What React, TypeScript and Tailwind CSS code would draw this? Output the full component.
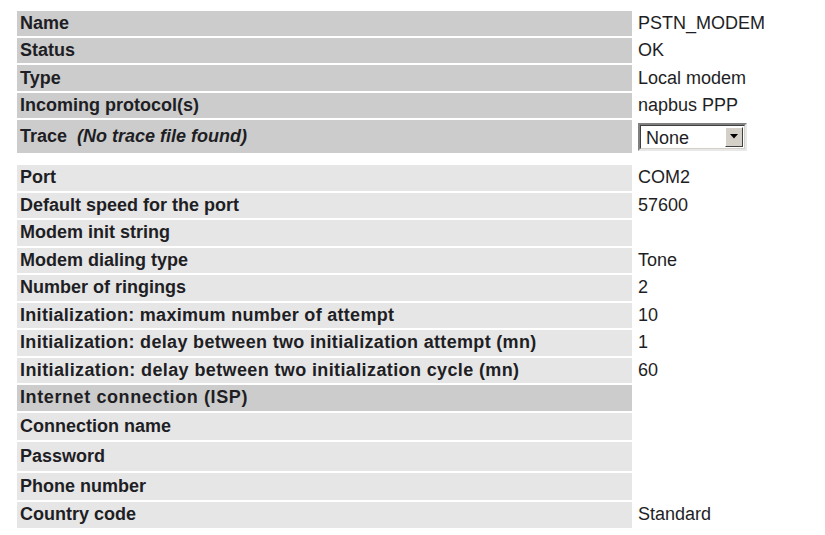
import React from "react";

type Row = { label: React.ReactNode; value?: React.ReactNode; h: string; dark?: boolean; wide?: string };

function Select() {
  return (
    <div className="flex h-[28px] w-[109px] items-stretch border-2 border-t-[#808080] border-l-[#808080] border-b-[#e8e8e8] border-r-[#e8e8e8] bg-white">
      <div className="flex flex-1 items-stretch border border-t-[#404040] border-l-[#404040] border-b-[#d4d0c8] border-r-[#d4d0c8]">
        <span className="flex-1 pl-[5px] leading-[24px]">None</span>
        <span className="my-[1px] mr-[1px] flex w-[18px] items-center justify-center border border-t-white border-l-white border-b-[#404040] border-r-[#404040] bg-[#d4d0c8]">
          <svg width="8" height="5" viewBox="0 0 8 5">
            <path d="M0 0h8L4 4.5z" fill="#000" />
          </svg>
        </span>
      </div>
    </div>
  );
}

function Table({ rows, dark }: { rows: Row[]; dark?: boolean }) {
  return (
    <div className="flex flex-col gap-[2px]">
      {rows.map((r, i) => (
        <div key={i} className="grid grid-cols-[615px_1fr] gap-[2px]">
          <div
            className={`${r.h} ${r.wide ?? ""} flex items-center pl-[3px] font-bold ${
              dark || r.dark ? "bg-[#cccccc]" : "bg-[#e6e6e6]"
            }`}
          >
            {r.label}
          </div>
          <div className={`${r.h} flex items-center pl-[4px]`}>{r.value}</div>
        </div>
      ))}
    </div>
  );
}

export default function App() {
  const top: Row[] = [
    { label: "Name", value: "PSTN_MODEM", h: "h-[25px]" },
    { label: "Status", value: "OK", h: "h-[25px]" },
    { label: "Type", value: "Local modem", h: "h-[26px]" },
    { label: "Incoming protocol(s)", value: "napbus PPP", h: "h-[25px]" },
    {
      label: (
        <span>
          Trace&nbsp;&nbsp;<i>(No trace file found)</i>
        </span>
      ),
      value: <Select />,
      h: "h-[33px]",
    },
  ];

  const bottom: Row[] = [
    { label: "Port", value: "COM2", h: "h-[25.5px]" },
    { label: "Default speed for the port", value: "57600", h: "h-[25.5px]" },
    { label: "Modem init string", h: "h-[25.5px]" },
    { label: "Modem dialing type", value: "Tone", h: "h-[25.5px]" },
    { label: "Number of ringings", value: "2", h: "h-[25.5px]" },
    { label: "Initialization: maximum number of attempt", value: "10", h: "h-[25.5px]", wide: "tracking-[0.3px]" },
    { label: "Initialization: delay between two initialization attempt (mn)", value: "1", h: "h-[25.5px]", wide: "tracking-[0.32px]" },
    { label: "Initialization: delay between two initialization cycle (mn)", value: "60", h: "h-[25.5px]", wide: "tracking-[0.38px]" },
    { label: "Internet connection (ISP)", h: "h-[25.5px]", dark: true, wide: "tracking-[0.6px]" },
    { label: "Connection name", h: "h-[27px]" },
    { label: "Password", h: "h-[29px]" },
    { label: "Phone number", h: "h-[27px]" },
    { label: "Country code", value: "Standard", h: "h-[26px]" },
  ];

  return (
    <div className="h-[535px] w-[825px] bg-white pl-[17px] pt-[11px] font-['Liberation_Sans',Arial,sans-serif] text-[18px] text-[#1e1e24]">
      <Table rows={top} dark />
      <div className="h-[12px]" />
      <Table rows={bottom} />
    </div>
  );
}
